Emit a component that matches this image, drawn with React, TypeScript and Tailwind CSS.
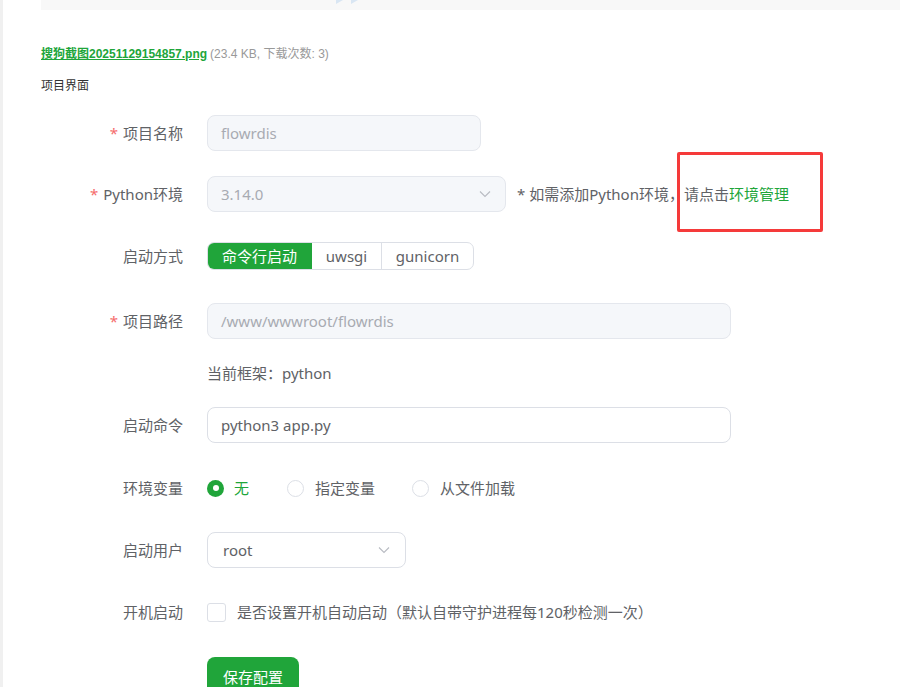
import React from "react";

const font = { fontFamily: '"Noto Sans", "Noto Sans CJK SC", sans-serif' };

function Chevron() {
  return (
    <svg width="12" height="8" viewBox="0 0 12 8" fill="none">
      <path d="M1 1.5 L6 6.5 L11 1.5" stroke="#b8bbc2" strokeWidth="1.1" />
    </svg>
  );
}

function Label({ text, required }: { text: string; required?: boolean }) {
  return (
    <div className="w-[142px] pr-0 flex justify-end items-center text-[15px] text-[#606266] shrink-0">
      {required && <span className="text-[#f56c6c] mr-[5px]">*</span>}
      <span>{text}</span>
    </div>
  );
}

export default function App() {
  return (
    <div
      className="relative w-[900px] h-[687px] overflow-hidden bg-white border-l-[3px] border-[#f0f0f0]"
      style={font}
    >
      <div className="pl-[38px]">
        {/* top gray image strip */}
        <div className="relative h-[10px] bg-[#f8f8f8]">
          <svg className="absolute left-[295px] top-0" width="24" height="4" viewBox="0 0 24 4">
            <polygon points="0,0 7,0 0,4" fill="#d9e6f3" />
            <polygon points="15,0 22,0 15,4" fill="#d9e6f3" />
          </svg>
        </div>

        <div
          className="mt-[36px] text-[12px] leading-[16px] flex items-center"
          style={{ fontFamily: '"Liberation Sans", "Noto Sans CJK SC", sans-serif' }}
        >
          <span className="text-[#20a53a] underline font-bold">搜狗截图20251129154857.png</span>
          <span className="text-[#999] ml-[3px]">(23.4 KB, 下载次数: 3)</span>
        </div>

        <div className="mt-[16px] text-[12px] leading-[16px] text-[#333]">项目界面</div>

        {/* form */}
        <div className="mt-[21px] flex flex-col">
          {/* Row 1 */}
          <div className="flex items-center h-9">
            <Label text="项目名称" required />
            <div className="ml-[24px] w-[274px] h-9 rounded-[8px] bg-[#f5f7fa] border border-[#e4e7ed] flex items-center px-[13px] text-[15px] text-[#a8abb2]">
              flowrdis
            </div>
          </div>

          {/* Row 2 */}
          <div className="flex items-center h-9 mt-[25px]">
            <Label text="Python环境" required />
            <div className="ml-[24px] w-[299px] h-9 rounded-[8px] bg-[#f5f7fa] border border-[#e4e7ed] flex items-center justify-between pl-[13px] pr-[14px] text-[15px] text-[#a8abb2]">
              <span>3.14.0</span>
              <Chevron />
            </div>
            <div className="ml-[11px] text-[15px] text-[#606266]">
              * 如需添加Python环境，请点击<span className="text-[#20a53a]">环境管理</span>
            </div>
          </div>

          {/* Row 3 */}
          <div className="flex items-center h-9 mt-[26px]">
            <Label text="启动方式" />
            <div className="ml-[24px] flex h-[28px] rounded-[7px] border border-[#dcdfe6] overflow-hidden text-[15px]">
              <div className="w-[105px] bg-[#20a53a] text-white flex items-center justify-center -ml-px -my-px h-[28px]">
                命令行启动
              </div>
              <div className="w-[70px] text-[#606266] flex items-center justify-center border-r border-[#dcdfe6]">
                uwsgi
              </div>
              <div className="w-[91px] text-[#606266] flex items-center justify-center">gunicorn</div>
            </div>
          </div>

          {/* Row 4 */}
          <div className="flex items-center h-9 mt-[29px]">
            <Label text="项目路径" required />
            <div className="ml-[24px] w-[524px] h-9 rounded-[8px] bg-[#f5f7fa] border border-[#e4e7ed] flex items-center px-[13px] text-[15px] text-[#a8abb2]">
              /www/wwwroot/flowrdis
            </div>
          </div>

          <div className="flex mt-[22px] h-[24px] items-center">
            <div className="w-[166px] shrink-0" />
            <div className="text-[15px] text-[#606266]">当前框架：python</div>
          </div>

          {/* Row 5 */}
          <div className="flex items-center h-9 mt-[22px]">
            <Label text="启动命令" />
            <div className="ml-[24px] w-[524px] h-9 rounded-[8px] bg-white border border-[#dcdfe6] flex items-center px-[13px] text-[15px] text-[#606266]">
              python3 app.py
            </div>
          </div>

          {/* Row 6 */}
          <div className="flex items-center h-9 mt-[27px]">
            <Label text="环境变量" />
            <div className="ml-[24px] flex items-center text-[15px]">
              <div className="flex items-center">
                <span className="w-[17px] h-[17px] rounded-full bg-[#20a53a] flex items-center justify-center">
                  <span className="w-[6px] h-[6px] rounded-full bg-white" />
                </span>
                <span className="ml-[10px] text-[#20a53a]">无</span>
              </div>
              <div className="flex items-center ml-[38px]">
                <span className="w-[17px] h-[17px] rounded-full border border-[#dcdfe6] bg-white" />
                <span className="ml-[11px] text-[#606266]">指定变量</span>
              </div>
              <div className="flex items-center ml-[37px]">
                <span className="w-[17px] h-[17px] rounded-full border border-[#dcdfe6] bg-white" />
                <span className="ml-[11px] text-[#606266]">从文件加载</span>
              </div>
            </div>
          </div>

          {/* Row 7 */}
          <div className="flex items-center h-9 mt-[26px]">
            <Label text="启动用户" />
            <div className="ml-[24px] w-[199px] h-9 rounded-[8px] bg-white border border-[#dcdfe6] flex items-center justify-between pl-[15px] pr-[15px] text-[15px] text-[#606266]">
              <span>root</span>
              <Chevron />
            </div>
          </div>

          {/* Row 8 */}
          <div className="flex items-center h-9 mt-[26px]">
            <Label text="开机启动" />
            <div className="ml-[24px] flex items-center text-[15px] text-[#606266]">
              <span className="w-[19px] h-[19px] rounded-[3px] border border-[#dcdfe6] bg-white" />
              <span className="ml-[11px]">是否设置开机自动启动（默认自带守护进程每120秒检测一次）</span>
            </div>
          </div>

          {/* Save */}
          <div className="flex mt-[27px]">
            <div className="w-[166px] shrink-0" />
            <div className="h-[40px] px-[16px] rounded-[8px] bg-[#20a53a] text-white text-[15px] flex items-center justify-center">
              保存配置
            </div>
          </div>
        </div>
      </div>

      {/* red annotation box */}
      <div className="absolute left-[674px] top-[152px] w-[146px] h-[80px] border-[3px] border-[#f53a3a] rounded-[2px]" />
    </div>
  );
}
